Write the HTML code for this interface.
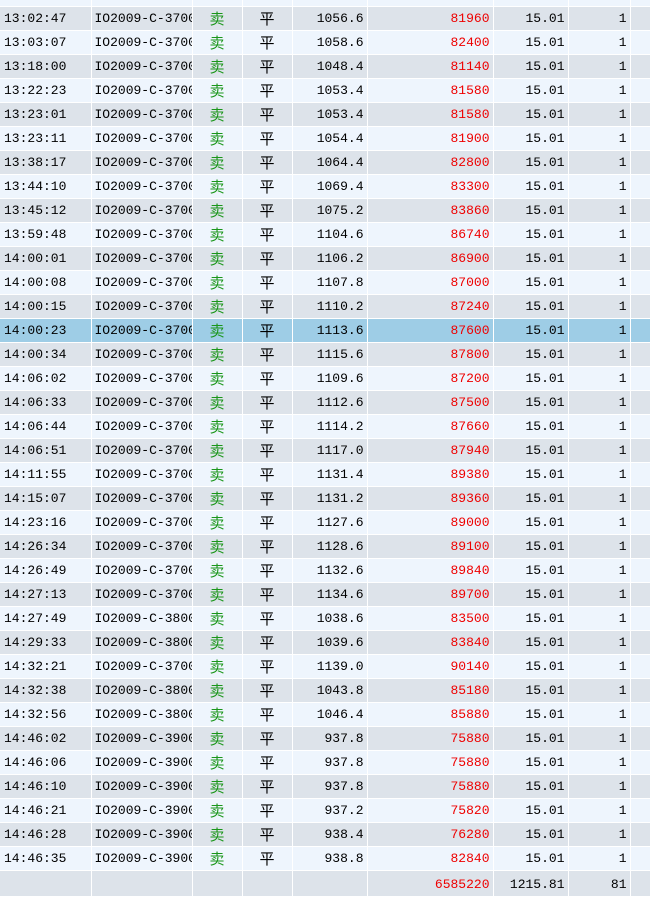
<!DOCTYPE html>
<html><head><meta charset="utf-8"><style>
body{margin:0;width:650px;height:884px;overflow:hidden;background:#eef5fd;font-family:"Liberation Mono","Noto Sans CJK SC",monospace;font-size:13px;}
table{position:absolute;left:0;top:-17px;border-collapse:collapse;table-layout:fixed;width:650px}
td{height:23px;padding:0;border-right:1px solid #fff;border-bottom:1px solid #fff;white-space:nowrap;overflow:hidden;color:#000;line-height:23px}
tr:nth-child(even) td{background:#dde3ea}
tr:nth-child(odd) td{background:#eef5fd}
tr.h td{background:#9ecde6}
td.a{padding-left:4px}
td.b{padding-left:3px}
td.s{color:#1a961a;text-align:center;font-family:"Noto Sans CJK SC",sans-serif;font-size:15px}
td.p{text-align:center;font-family:"Noto Sans CJK SC",sans-serif;font-size:15px}
td.r{text-align:right;padding-right:3px}
td.red{color:#e00;text-align:right;padding-right:3px}
</style></head><body>
<table>
<colgroup><col style="width:91px"><col style="width:101px"><col style="width:50px"><col style="width:50px"><col style="width:75px"><col style="width:126px"><col style="width:75px"><col style="width:62px"><col style="width:20px"></colgroup>
<tr><td></td><td></td><td></td><td></td><td></td><td></td><td></td><td></td><td></td></tr>
<tr><td class="a">13:02:47</td><td class="b">IO2009-C-3700</td><td class="s">卖</td><td class="p">平</td><td class="r">1056.6</td><td class="red">81960</td><td class="r">15.01</td><td class="r">1</td><td></td></tr>
<tr><td class="a">13:03:07</td><td class="b">IO2009-C-3700</td><td class="s">卖</td><td class="p">平</td><td class="r">1058.6</td><td class="red">82400</td><td class="r">15.01</td><td class="r">1</td><td></td></tr>
<tr><td class="a">13:18:00</td><td class="b">IO2009-C-3700</td><td class="s">卖</td><td class="p">平</td><td class="r">1048.4</td><td class="red">81140</td><td class="r">15.01</td><td class="r">1</td><td></td></tr>
<tr><td class="a">13:22:23</td><td class="b">IO2009-C-3700</td><td class="s">卖</td><td class="p">平</td><td class="r">1053.4</td><td class="red">81580</td><td class="r">15.01</td><td class="r">1</td><td></td></tr>
<tr><td class="a">13:23:01</td><td class="b">IO2009-C-3700</td><td class="s">卖</td><td class="p">平</td><td class="r">1053.4</td><td class="red">81580</td><td class="r">15.01</td><td class="r">1</td><td></td></tr>
<tr><td class="a">13:23:11</td><td class="b">IO2009-C-3700</td><td class="s">卖</td><td class="p">平</td><td class="r">1054.4</td><td class="red">81900</td><td class="r">15.01</td><td class="r">1</td><td></td></tr>
<tr><td class="a">13:38:17</td><td class="b">IO2009-C-3700</td><td class="s">卖</td><td class="p">平</td><td class="r">1064.4</td><td class="red">82800</td><td class="r">15.01</td><td class="r">1</td><td></td></tr>
<tr><td class="a">13:44:10</td><td class="b">IO2009-C-3700</td><td class="s">卖</td><td class="p">平</td><td class="r">1069.4</td><td class="red">83300</td><td class="r">15.01</td><td class="r">1</td><td></td></tr>
<tr><td class="a">13:45:12</td><td class="b">IO2009-C-3700</td><td class="s">卖</td><td class="p">平</td><td class="r">1075.2</td><td class="red">83860</td><td class="r">15.01</td><td class="r">1</td><td></td></tr>
<tr><td class="a">13:59:48</td><td class="b">IO2009-C-3700</td><td class="s">卖</td><td class="p">平</td><td class="r">1104.6</td><td class="red">86740</td><td class="r">15.01</td><td class="r">1</td><td></td></tr>
<tr><td class="a">14:00:01</td><td class="b">IO2009-C-3700</td><td class="s">卖</td><td class="p">平</td><td class="r">1106.2</td><td class="red">86900</td><td class="r">15.01</td><td class="r">1</td><td></td></tr>
<tr><td class="a">14:00:08</td><td class="b">IO2009-C-3700</td><td class="s">卖</td><td class="p">平</td><td class="r">1107.8</td><td class="red">87000</td><td class="r">15.01</td><td class="r">1</td><td></td></tr>
<tr><td class="a">14:00:15</td><td class="b">IO2009-C-3700</td><td class="s">卖</td><td class="p">平</td><td class="r">1110.2</td><td class="red">87240</td><td class="r">15.01</td><td class="r">1</td><td></td></tr>
<tr class="h"><td class="a">14:00:23</td><td class="b">IO2009-C-3700</td><td class="s">卖</td><td class="p">平</td><td class="r">1113.6</td><td class="red">87600</td><td class="r">15.01</td><td class="r">1</td><td></td></tr>
<tr><td class="a">14:00:34</td><td class="b">IO2009-C-3700</td><td class="s">卖</td><td class="p">平</td><td class="r">1115.6</td><td class="red">87800</td><td class="r">15.01</td><td class="r">1</td><td></td></tr>
<tr><td class="a">14:06:02</td><td class="b">IO2009-C-3700</td><td class="s">卖</td><td class="p">平</td><td class="r">1109.6</td><td class="red">87200</td><td class="r">15.01</td><td class="r">1</td><td></td></tr>
<tr><td class="a">14:06:33</td><td class="b">IO2009-C-3700</td><td class="s">卖</td><td class="p">平</td><td class="r">1112.6</td><td class="red">87500</td><td class="r">15.01</td><td class="r">1</td><td></td></tr>
<tr><td class="a">14:06:44</td><td class="b">IO2009-C-3700</td><td class="s">卖</td><td class="p">平</td><td class="r">1114.2</td><td class="red">87660</td><td class="r">15.01</td><td class="r">1</td><td></td></tr>
<tr><td class="a">14:06:51</td><td class="b">IO2009-C-3700</td><td class="s">卖</td><td class="p">平</td><td class="r">1117.0</td><td class="red">87940</td><td class="r">15.01</td><td class="r">1</td><td></td></tr>
<tr><td class="a">14:11:55</td><td class="b">IO2009-C-3700</td><td class="s">卖</td><td class="p">平</td><td class="r">1131.4</td><td class="red">89380</td><td class="r">15.01</td><td class="r">1</td><td></td></tr>
<tr><td class="a">14:15:07</td><td class="b">IO2009-C-3700</td><td class="s">卖</td><td class="p">平</td><td class="r">1131.2</td><td class="red">89360</td><td class="r">15.01</td><td class="r">1</td><td></td></tr>
<tr><td class="a">14:23:16</td><td class="b">IO2009-C-3700</td><td class="s">卖</td><td class="p">平</td><td class="r">1127.6</td><td class="red">89000</td><td class="r">15.01</td><td class="r">1</td><td></td></tr>
<tr><td class="a">14:26:34</td><td class="b">IO2009-C-3700</td><td class="s">卖</td><td class="p">平</td><td class="r">1128.6</td><td class="red">89100</td><td class="r">15.01</td><td class="r">1</td><td></td></tr>
<tr><td class="a">14:26:49</td><td class="b">IO2009-C-3700</td><td class="s">卖</td><td class="p">平</td><td class="r">1132.6</td><td class="red">89840</td><td class="r">15.01</td><td class="r">1</td><td></td></tr>
<tr><td class="a">14:27:13</td><td class="b">IO2009-C-3700</td><td class="s">卖</td><td class="p">平</td><td class="r">1134.6</td><td class="red">89700</td><td class="r">15.01</td><td class="r">1</td><td></td></tr>
<tr><td class="a">14:27:49</td><td class="b">IO2009-C-3800</td><td class="s">卖</td><td class="p">平</td><td class="r">1038.6</td><td class="red">83500</td><td class="r">15.01</td><td class="r">1</td><td></td></tr>
<tr><td class="a">14:29:33</td><td class="b">IO2009-C-3800</td><td class="s">卖</td><td class="p">平</td><td class="r">1039.6</td><td class="red">83840</td><td class="r">15.01</td><td class="r">1</td><td></td></tr>
<tr><td class="a">14:32:21</td><td class="b">IO2009-C-3700</td><td class="s">卖</td><td class="p">平</td><td class="r">1139.0</td><td class="red">90140</td><td class="r">15.01</td><td class="r">1</td><td></td></tr>
<tr><td class="a">14:32:38</td><td class="b">IO2009-C-3800</td><td class="s">卖</td><td class="p">平</td><td class="r">1043.8</td><td class="red">85180</td><td class="r">15.01</td><td class="r">1</td><td></td></tr>
<tr><td class="a">14:32:56</td><td class="b">IO2009-C-3800</td><td class="s">卖</td><td class="p">平</td><td class="r">1046.4</td><td class="red">85880</td><td class="r">15.01</td><td class="r">1</td><td></td></tr>
<tr><td class="a">14:46:02</td><td class="b">IO2009-C-3900</td><td class="s">卖</td><td class="p">平</td><td class="r">937.8</td><td class="red">75880</td><td class="r">15.01</td><td class="r">1</td><td></td></tr>
<tr><td class="a">14:46:06</td><td class="b">IO2009-C-3900</td><td class="s">卖</td><td class="p">平</td><td class="r">937.8</td><td class="red">75880</td><td class="r">15.01</td><td class="r">1</td><td></td></tr>
<tr><td class="a">14:46:10</td><td class="b">IO2009-C-3900</td><td class="s">卖</td><td class="p">平</td><td class="r">937.8</td><td class="red">75880</td><td class="r">15.01</td><td class="r">1</td><td></td></tr>
<tr><td class="a">14:46:21</td><td class="b">IO2009-C-3900</td><td class="s">卖</td><td class="p">平</td><td class="r">937.2</td><td class="red">75820</td><td class="r">15.01</td><td class="r">1</td><td></td></tr>
<tr><td class="a">14:46:28</td><td class="b">IO2009-C-3900</td><td class="s">卖</td><td class="p">平</td><td class="r">938.4</td><td class="red">76280</td><td class="r">15.01</td><td class="r">1</td><td></td></tr>
<tr><td class="a">14:46:35</td><td class="b">IO2009-C-3900</td><td class="s">卖</td><td class="p">平</td><td class="r">938.8</td><td class="red">82840</td><td class="r">15.01</td><td class="r">1</td><td></td></tr>
<tr><td style="background:#dde3ea"></td><td style="background:#dde3ea"></td><td style="background:#dde3ea"></td><td style="background:#dde3ea"></td><td style="background:#dde3ea"></td><td class="red" style="background:#dde3ea;vertical-align:top;line-height:23px;padding-top:2px">6585220</td><td class="r" style="background:#dde3ea;padding-top:2px">1215.81</td><td class="r" style="background:#dde3ea;padding-top:2px">81</td><td style="background:#dde3ea"></td></tr>
</table>
</body></html>
